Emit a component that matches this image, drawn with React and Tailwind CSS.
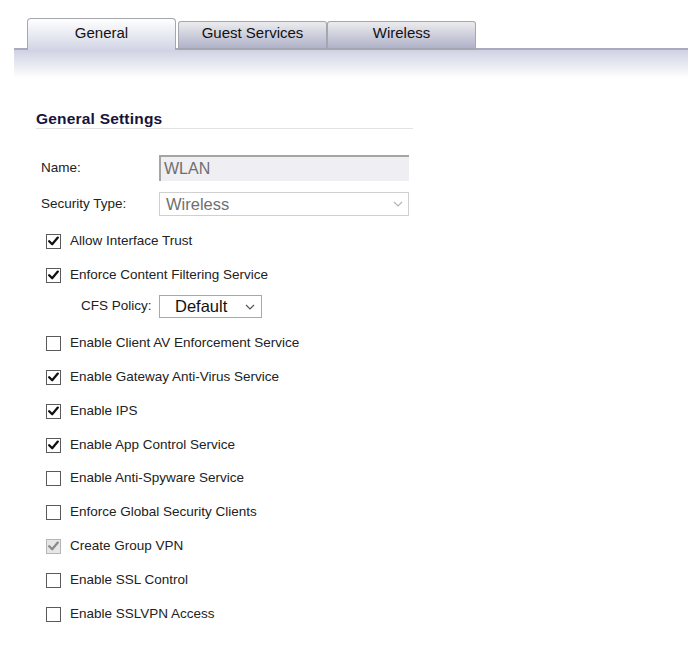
import React from "react";

const F = { fontFamily: '"Liberation Sans", Arial, sans-serif' };

function Check({ checked, disabled }) {
  return (
    <span
      className={
        "w-[15px] h-[15px] border flex items-center justify-center shrink-0 " +
        (disabled ? "border-[#b5b5b5] bg-[#e6e6e6]" : "border-[#5a5a5a] bg-white")
      }
    >
      {checked && (
        <svg width="11" height="10" viewBox="0 0 11 10">
          <path
            d="M1.2 5.2 L4.2 8.2 L9.8 1.6"
            fill="none"
            stroke={disabled ? "#8a8a8a" : "#111"}
            strokeWidth="2.3"
            strokeLinecap="round"
            strokeLinejoin="round"
          />
        </svg>
      )}
    </span>
  );
}

function Chevron({ color }) {
  return (
    <svg width="10" height="6" viewBox="0 0 10 6">
      <path d="M1 1 L5 5 L9 1" fill="none" stroke={color} strokeWidth="1.2" />
    </svg>
  );
}

function Row({ label, checked, disabled, short }) {
  return (
    <div className={(short ? "h-[33px]" : "h-[34px]") + " flex items-center pl-[10px] gap-[9px]"}>
      <Check checked={checked} disabled={disabled} />
      <span className="text-[13.5px] text-[#222]">{label}</span>
    </div>
  );
}

export default function App() {
  const rows1 = [
    ["Allow Interface Trust", true],
    ["Enforce Content Filtering Service", true],
  ];
  const rows2 = [
    ["Enable Client AV Enforcement Service", false],
    ["Enable Gateway Anti-Virus Service", true],
    ["Enable IPS", true],
    ["Enable App Control Service", true],
    ["Enable Anti-Spyware Service", false, false, true],
    ["Enforce Global Security Clients", false],
    ["Create Group VPN", true, true],
    ["Enable SSL Control", false],
    ["Enable SSLVPN Access", false],
  ];
  return (
    <div className="w-[688px] h-[648px] bg-white overflow-hidden" style={F}>
      <div className="pl-[14px] pt-[18px]">
        <div className="flex items-end h-[32px]">
          <div className="w-[13px] border-b-2 border-[#a9aabb]" />
          <div className="w-[149px] h-[32px] rounded-t-[4px] border border-b-0 border-[#a6a6ae] bg-gradient-to-b from-white to-[#d2d5e5] flex items-center justify-center pb-[3px] text-[15px] text-[#111]">
            General
          </div>
          <div className="w-[2px] border-b-2 border-[#a9aabb]" />
          <div className="w-[149px] h-[29px] rounded-t-[3px] border border-b-2 border-[#a6a6ae] bg-gradient-to-b from-[#ececef] to-[#b0b2c8] flex items-center justify-center pb-[3px] text-[15px] text-[#111]">
            Guest Services
          </div>
          <div className="w-[149px] h-[29px] rounded-t-[3px] border border-b-2 border-[#a6a6ae] bg-gradient-to-b from-[#ececef] to-[#b0b2c8] flex items-center justify-center pb-[3px] text-[15px] text-[#111]">
            Wireless
          </div>
          <div className="flex-1 border-b-2 border-[#a9aabb]" />
        </div>
        <div className="h-[28px] bg-gradient-to-b from-[#cfd2e3] to-white" />
      </div>

      <div className="pl-[36px] pt-[32px] w-[413px]">
        <div className="border-b border-[#e2e2e2] h-[19px] text-[15.5px] tracking-[0.2px] font-bold text-[#14143c] leading-[18px]">
          General Settings
        </div>

        <div className="pt-[26px] pl-[5px]">
          <div className="flex items-center h-[26px]">
            <span className="w-[118px] text-[13.5px] text-[#222]">Name:</span>
            <div className="w-[250px] h-[26px] bg-[#efeff3] border-t-2 border-l-2 border-[#a5a5a5] flex items-center pl-[3px] text-[16px] text-[#6e6e6e]">
              WLAN
            </div>
          </div>
          <div className="flex items-center h-[24px] mt-[11px]">
            <span className="w-[118px] text-[13.5px] text-[#222]">Security Type:</span>
            <div className="w-[250px] h-[24px] border border-[#d0d0d0] bg-white flex items-center justify-between pl-[6px] pr-[5px] text-[16.5px] text-[#707070]">
              <span>Wireless</span>
              <Chevron color="#b5b5b5" />
            </div>
          </div>
        </div>

        <div className="pt-[8px]">
          {rows1.map(([l, c]) => (
            <Row key={l} label={l} checked={c} />
          ))}
          <div className="h-[34px] flex items-start pt-[3px] pl-[45px]">
            <span className="w-[78px] h-[23px] flex items-center text-[13.5px] text-[#222]">CFS Policy:</span>
            <div className="w-[103px] h-[23px] border border-[#a8a8a8] bg-white flex items-center justify-between pl-[15px] pr-[6px] text-[16.5px] text-[#111]">
              <span>Default</span>
              <Chevron color="#555" />
            </div>
          </div>
          {rows2.map(([l, c, d, s]) => (
            <Row key={l} label={l} checked={c} disabled={d} short={s} />
          ))}
        </div>
      </div>
    </div>
  );
}
